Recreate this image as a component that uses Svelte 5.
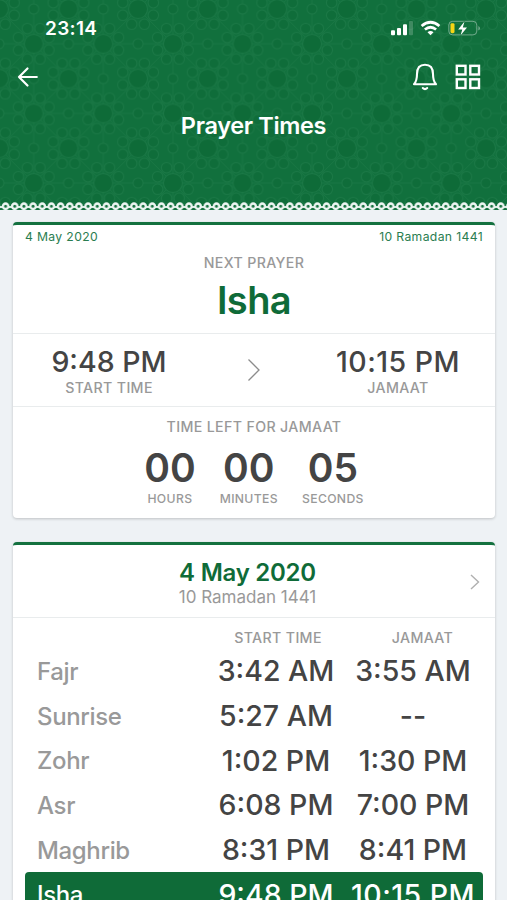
<script>
  let hijriDate = '10 Ramadan 1441'
  let date = '4 May 2020'

  let countdown = [
    { value: '00', label: 'HOURS' },
    { value: '00', label: 'MINUTES' },
    { value: '05', label: 'SECONDS' }
  ]

  let prayers = [
    { name: 'Fajr', start: '3:42 AM', jamaat: '3:55 AM' },
    { name: 'Sunrise', start: '5:27 AM', jamaat: '--' },
    { name: 'Zohr', start: '1:02 PM', jamaat: '1:30 PM' },
    { name: 'Asr', start: '6:08 PM', jamaat: '7:00 PM' },
    { name: 'Maghrib', start: '8:31 PM', jamaat: '8:41 PM' },
    { name: 'Isha', start: '9:48 PM', jamaat: '10:15 PM' }
  ]
  let next = 'Isha'

  // rosettes of the header pattern: one big circle with small ones around it
  let size = 69.6
  let half = size / 2
  let centres = [[0, 0], [size, 0], [0, size], [size, size], [half, half]]
  let petals = [0, 1, 2, 3, 4, 5, 6, 7].map(i => {
    let a = (i + 0.5) * Math.PI / 4
    return [Math.cos(a) * 16.5, Math.sin(a) * 16.5]
  })
</script>

<div class="screen">
  <header>
    <svg class="pattern" width="507" height="210">
      <defs>
        <pattern id="rosettes" x="68.5" y="9" width={size} height={size} patternUnits="userSpaceOnUse">
          <g fill="#0f6d3a" stroke="#1b7846" stroke-width="1">
            <path d="M0 0L{size} {size}M{size} 0L0 {size}M{half} 0V{size}M0 {half}H{size}" stroke-width=".8" />
            {#each centres as [x, y]}
              {#each petals as [px, py]}
                <circle cx={x + px} cy={y + py} r="5.2" />
              {/each}
              <circle cx={x} cy={y} r="9.5" fill="#0e6b38" />
            {/each}
            <circle cx={half} cy="0" r="5" />
            <circle cx={half} cy={size} r="5" />
            <circle cx="0" cy={half} r="5" />
            <circle cx={size} cy={half} r="5" />
          </g>
        </pattern>
        <pattern id="lace" x="1" y="201" width="9.17" height="9" patternUnits="userSpaceOnUse">
          <path d="M0 6H9.17" stroke="#dcebe3" stroke-width="2" />
          <circle cx="4.58" cy="5.2" r="2.7" fill="#17713f" stroke="#edf5f2" stroke-width="2.3" />
        </pattern>
      </defs>
      <rect width="507" height="210" fill="#11703d" />
      <rect width="507" height="210" fill="url(#rosettes)" />
      <rect y="201" width="507" height="9" fill="url(#lace)" />
    </svg>

    <div class="status">
      <span class="clock">23:14</span>
      <svg width="92" height="18" viewBox="0 0 92 18">
        <g fill="#fff">
          <rect x="1" y="10.2" width="4" height="5" rx="1" />
          <rect x="7" y="8" width="4" height="7.2" rx="1" />
          <rect x="13" y="4.2" width="4" height="11" rx="1" />
          <rect x="19" y="1" width="4" height="14.2" rx="1" opacity=".2" />
        </g>
        <g fill="none" stroke="#fff" stroke-width="2.7">
          <path d="M31.6 6Q40.5 -1.5 49.4 6" />
          <path d="M34.9 9.5Q40.5 5 46.1 9.5" />
        </g>
        <path d="M37.5 12.2Q40.5 9.8 43.5 12.2L40.5 15.2Z" fill="#fff" />
        <rect x="58.8" y="1.3" width="28" height="13.6" rx="3.8" fill="none" stroke="#fff" stroke-opacity=".4" />
        <path d="M88.4 6v4.5q1.6-.6 1.6-2.2t-1.6-2.3" fill="#fff" opacity=".4" />
        <rect x="60.5" y="3.2" width="4" height="10" rx="1.4" fill="#f6d515" />
        <path d="M74.5 1.5l-6.3 8h4.1l-1.8 6 6.5-8h-4.2z" fill="#fff" stroke="#116f3c" stroke-width="1.2" paint-order="stroke" />
      </svg>
    </div>

    <div class="nav">
      <svg width="22" height="22" viewBox="0 0 22 22" fill="none" stroke="#fff" stroke-width="2.2" stroke-linecap="round" stroke-linejoin="round">
        <path d="M19.8 11H2M10.5 2.5L2 11l8.5 8.5" />
      </svg>
      <div class="actions">
        <svg width="26" height="28" viewBox="0 0 26 28" fill="none" stroke="#fff" stroke-width="2.1" stroke-linejoin="round" stroke-linecap="round">
          <path d="M2 21.3C4.5 18.5 5 16.5 5 11C5 5 8 1.7 13 1.7S21 5 21 11C21 16.5 21.5 18.5 24 21.3Z" />
          <path d="M10.8 25Q13 27.2 15.2 25" />
        </svg>
        <svg width="26" height="26" viewBox="0 0 26 26" fill="none" stroke="#fff" stroke-width="2.4">
          <rect x="1.8" y="1.8" width="8.7" height="8.7" />
          <rect x="15.3" y="1.8" width="8.7" height="8.7" />
          <rect x="1.8" y="15.3" width="8.7" height="8.7" />
          <rect x="15.3" y="15.3" width="8.7" height="8.7" />
        </svg>
      </div>
    </div>

    <h1>Prayer Times</h1>
  </header>

  <section class="card next">
    <div class="dates">
      <span>{date}</span>
      <span>{hijriDate}</span>
    </div>
    <div class="upcoming">
      <div class="label">NEXT PRAYER</div>
      <div class="prayer">{next}</div>
    </div>
    <div class="times">
      <div class="cell">
        <div class="time">9:48 PM</div>
        <div class="label">START TIME</div>
      </div>
      <svg width="14" height="24" viewBox="0 0 14 24" fill="none" stroke="#8c8c8c" stroke-width="1.3">
        <path d="M1.5 0.5L12 11L1.5 21.5" />
      </svg>
      <div class="cell">
        <div class="time long">10:15 PM</div>
        <div class="label">JAMAAT</div>
      </div>
    </div>
    <div class="left">
      <div class="label">TIME LEFT FOR JAMAAT</div>
      <div class="countdown">
        {#each countdown as { value, label }}
          <div class="unit">
            <div class="value">{value}</div>
            <div class="small">{label}</div>
          </div>
        {/each}
      </div>
    </div>
  </section>

  <section class="card day">
    <div class="dayhead">
      <div class="date">{date}</div>
      <div class="hijri">{hijriDate}</div>
      <svg class="chevron" width="10" height="16" viewBox="0 0 10 16" fill="none" stroke="#b0b0b0" stroke-width="1.4">
        <path d="M1 1L8.5 8L1 15" />
      </svg>
    </div>
    <div class="row head">
      <span></span>
      <span class="label">START TIME</span>
      <span class="label">JAMAAT</span>
    </div>
    {#each prayers as { name, start, jamaat }}
      <div class="row" class:active={name === next}>
        <span class="name">{name}</span>
        <span class="time">{start}</span>
        <span class="time" class:long={jamaat.length > 7}>{jamaat}</span>
      </div>
    {/each}
  </section>
</div>

<style>
  :global(body) {
    overflow: hidden;
  }

  .screen {
    width: 507px;
    height: 900px;
    overflow: hidden;
    background: #eef2f5;
    font-family: Inter, "Liberation Sans", sans-serif;
    color: #444;
  }

  svg {
    display: block;
    flex: none;
  }

  header {
    position: relative;
    height: 210px;
    color: #fff;
  }

  .pattern {
    position: absolute;
    top: 0;
    left: 0;
  }

  .status, .nav, h1 {
    position: relative;
  }

  .status {
    display: flex;
    justify-content: space-between;
    padding: 20px 25px 0 45px;
    height: 18px;
  }

  .clock {
    font-size: 19px;
    line-height: 18px;
    font-weight: 600;
    letter-spacing: 0.3px;
  }

  .nav {
    display: flex;
    align-items: center;
    justify-content: space-between;
    height: 28px;
    padding: 25px 26px 0 17px;
  }

  .actions {
    display: flex;
    align-items: center;
    gap: 17px;
  }

  h1 {
    margin: 20px 0 0;
    font-size: 23.5px;
    line-height: 30px;
    font-weight: 600;
    text-align: center;
    letter-spacing: -0.35px;
  }

  .card {
    box-sizing: border-box;
    width: 482px;
    margin: 12px 12px 0 13px;
    border-top: 3px solid #14713f;
    border-radius: 4px;
    background: #fff;
    box-shadow: 0 1px 3px rgba(0, 0, 0, 0.2);
  }

  .label {
    font-size: 14.2px;
    line-height: 18px;
    font-weight: 500;
    letter-spacing: 0.35px;
    color: #999;
  }

  .time {
    font-size: 28.5px;
    line-height: 34px;
    font-weight: 500;
    white-space: nowrap;
  }

  .time.long {
    letter-spacing: 0.45px;
  }

  .next {
    height: 296px;
    text-align: center;
  }

  .dates {
    display: flex;
    justify-content: space-between;
    padding: 4px 12px 0;
    font-size: 12.2px;
    line-height: 16px;
    letter-spacing: 0.35px;
    color: #2a7d50;
  }

  .upcoming {
    height: 79px;
    padding-top: 9px;
    border-bottom: 1px solid #e9eced;
  }

  .prayer {
    margin-top: 5px;
    font-size: 38px;
    line-height: 46px;
    font-weight: 600;
    letter-spacing: -0.6px;
    color: #0f6b38;
  }

  .times {
    display: flex;
    justify-content: space-between;
    align-items: center;
    box-sizing: border-box;
    height: 73px;
    padding: 2px 17px 0 16px;
    border-bottom: 1px solid #e9eced;
  }

  .cell {
    width: 160px;
  }

  .left {
    padding-top: 11px;
  }

  .countdown {
    display: flex;
    justify-content: center;
    gap: 24px;
    margin-top: 9px;
  }

  .value {
    font-size: 39px;
    line-height: 46px;
    font-weight: 600;
  }

  .small {
    font-size: 12.2px;
    line-height: 16px;
    font-weight: 500;
    letter-spacing: 0.35px;
    color: #999;
  }

  .day {
    height: 420px;
    margin-top: 24px;
  }

  .dayhead {
    position: relative;
    box-sizing: border-box;
    height: 73px;
    padding: 14px 13px 0 0;
    border-bottom: 1px solid #e9eced;
    text-align: center;
  }

  .date {
    font-size: 24px;
    line-height: 28px;
    font-weight: 600;
    letter-spacing: -0.25px;
    color: #0f6b38;
  }

  .hijri {
    font-size: 17px;
    line-height: 21px;
    color: #999;
  }

  .chevron {
    position: absolute;
    top: 29px;
    right: 15px;
  }

  .row {
    display: grid;
    grid-template-columns: 182px 138px 136px;
    align-items: center;
    height: 44.7px;
    margin: 0 12px;
    border-radius: 4px;
    text-align: center;
  }

  .head {
    height: 31px;
  }

  .head .label {
    padding: 8px 0 0 4px;
  }

  .head .label:last-child {
    padding-left: 19px;
  }

  .name {
    padding-left: 12px;
    font-size: 24px;
    font-weight: 500;
    letter-spacing: -0.35px;
    text-align: left;
    color: #999;
  }

  .active {
    background: #0f6b38;
  }

  .active span {
    color: #fff;
  }
</style>
